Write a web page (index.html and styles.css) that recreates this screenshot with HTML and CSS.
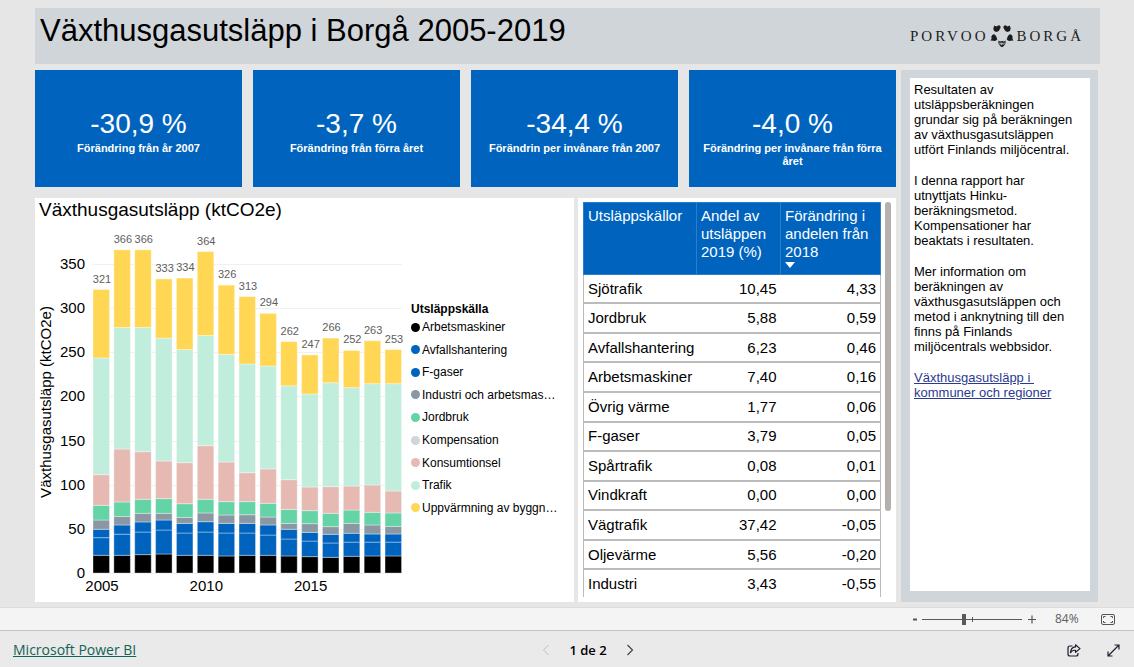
FILE: index.html
```html
<!DOCTYPE html>
<html lang="sv">
<head>
<meta charset="utf-8">
<title>Växthusgasutsläpp i Borgå 2005-2019</title>
<link rel="stylesheet" href="styles.css">
</head>
<body>
<main class="canvas">
  <header class="header">
    <h1 class="title">Växthusgasutsläpp i Borgå 2005-2019</h1>
    <div class="logo">
      <span>PORVOO</span>
      <svg class="logo-mark" viewBox="0 0 24 24" width="24" height="24" aria-hidden="true">
        <g fill="#1d1d1b">
          <path d="M4.300 1.500L6.500 2.500L8.500 1.200Q11 1.500 10.500 4Q9.500 7 6.500 8Q3.500 7.500 3.300 4.500Z"/>
          <path d="M19.700 1.500L17.500 2.500L15.500 1.200Q13 1.500 13.500 4Q14.500 7 17.500 8Q20.500 7.500 20.700 4.500Z"/>
          <path d="M.4 16.500L1.600 14.800L1.300 12.800Q2 10 4.300 10.300Q7 12 7.300 15.300Q6 17.500 3.500 16.800Z"/>
          <path d="M23.600 16.500L22.400 14.800L22.700 12.800Q22 10 19.700 10.300Q17 12 16.700 15.300Q18 17.500 20.500 16.800Z"/>
          <path d="M8.500 16.500L10 17.500L12 17L14 17.500L15.500 16.500Q16.300 21 12 23.200Q7.700 21 8.500 16.500Z"/>
        </g>
        <path d="M10 18.500V20.500M14 18.500V20.500M11.300 21V19Q12.500 18.500 13 20.700" stroke="#d0d5d9" stroke-width="1" fill="none"/>
      </svg>
      <span>BORGÅ</span>
    </div>
  </header>

  <div class="report">
    <div class="left">
      <section class="kpis">
        <article class="kpi"><p class="kpi-value">-30,9 %</p><p class="kpi-label">Förändring från år 2007</p></article>
        <article class="kpi"><p class="kpi-value">-3,7 %</p><p class="kpi-label">Förändring från förra året</p></article>
        <article class="kpi"><p class="kpi-value">-34,4 %</p><p class="kpi-label">Förändrin per invånare från 2007</p></article>
        <article class="kpi"><p class="kpi-value">-4,0 %</p><p class="kpi-label">Förändring per invånare från förra året</p></article>
      </section>
      <div class="panels">
        <section class="panel chart-panel">
          <h2 class="chart-title">Växthusgasutsläpp (ktCO2e)</h2>
          <div class="chart-body">
            <svg class="chart" id="chart" viewBox="0 0 372 376" width="372" height="376" role="img" aria-label="Växthusgasutsläpp per år"></svg>
            <div class="legend">
              <h3 class="legend-title">Utsläppskälla</h3>
              <ul class="legend-list">
                <li><i class="dot black"></i>Arbetsmaskiner</li>
                <li><i class="dot blue"></i>Avfallshantering</li>
                <li><i class="dot blue"></i>F-gaser</li>
                <li><i class="dot slate"></i>Industri och arbetsmas…</li>
                <li><i class="dot green"></i>Jordbruk</li>
                <li><i class="dot silver"></i>Kompensation</li>
                <li><i class="dot pink"></i>Konsumtionsel</li>
                <li><i class="dot mint"></i>Trafik</li>
                <li><i class="dot yellow"></i>Uppvärmning av byggn…</li>
              </ul>
            </div>
          </div>
        </section>
        <section class="panel table-panel">
          <div class="table-clip">
            <table class="sources">
              <thead>
                <tr><th class="col-name">Utsläppskällor</th><th class="col-share">Andel av utsläppen 2019 (%)</th><th>Förändring i andelen från 2018<svg class="sort" viewBox="0 0 10 6" width="10" height="6" aria-hidden="true"><path d="M0 0H10L5 6Z" fill="#fff"/></svg></th></tr>
              </thead>
              <tbody>
                <tr><td>Sjötrafik</td><td>10,45</td><td>4,33</td></tr>
                <tr><td>Jordbruk</td><td>5,88</td><td>0,59</td></tr>
                <tr><td>Avfallshantering</td><td>6,23</td><td>0,46</td></tr>
                <tr><td>Arbetsmaskiner</td><td>7,40</td><td>0,16</td></tr>
                <tr><td>Övrig värme</td><td>1,77</td><td>0,06</td></tr>
                <tr><td>F-gaser</td><td>3,79</td><td>0,05</td></tr>
                <tr><td>Spårtrafik</td><td>0,08</td><td>0,01</td></tr>
                <tr><td>Vindkraft</td><td>0,00</td><td>0,00</td></tr>
                <tr><td>Vägtrafik</td><td>37,42</td><td>-0,05</td></tr>
                <tr><td>Oljevärme</td><td>5,56</td><td>-0,20</td></tr>
                <tr><td>Industri</td><td>3,43</td><td>-0,55</td></tr>
              </tbody>
            </table>
          </div>
          <div class="scroll-thumb"></div>
        </section>
      </div>
    </div>
    <aside class="info">
      <div class="info-text">
        <p>Resultaten av utsläppsberäkningen grundar sig på beräkningen av växthusgasutsläppen utfört Finlands miljöcentral.</p>
        <p>I denna rapport har utnyttjats Hinku-beräkningsmetod. Kompensationer har beaktats i resultaten.</p>
        <p>Mer information om beräkningen av växthusgasutsläppen och metod i anknytning till den finns på Finlands miljöcentrals webbsidor.</p>
        <p><a class="info-link" href="#">Växthusgasutsläpp i&nbsp; kommuner och regioner</a></p>
      </div>
    </aside>
  </div>
</main>

<div class="zoombar">
  <button class="icon-btn zoom-step" aria-label="Zooma ut"><svg viewBox="0 0 8 10" width="8" height="10"><path d="M2 5.500H6" stroke="#555" stroke-width="2"/></svg></button>
  <input class="zoom-range" type="range" min="0" max="100" value="42" aria-label="Zoom">
  <button class="icon-btn zoom-step plus" aria-label="Zooma in"><svg viewBox="0 0 8 10" width="8" height="10"><path d="M0 5.500H8M4 1.500V9.500" stroke="#555" stroke-width="1.200"/></svg></button>
  <span class="zoom-value">84%</span>
  <button class="icon-btn" aria-label="Anpassa till sidan"><svg viewBox="0 0 14 11" width="14" height="11" fill="none" stroke="#555"><rect x=".5" y=".5" width="13" height="10" rx="1.500"/><path d="M2.500 4V2.500H4.500M9.500 2.500H11.500V4M2.500 7V8.500H4.500M9.500 8.500H11.500V7"/></svg></button>
</div>

<footer class="footer">
  <a class="brand" href="#">Microsoft Power BI</a>
  <nav class="pager">
    <button class="icon-btn" aria-label="Föregående sida" disabled><svg viewBox="0 0 8 12" width="8" height="12" fill="none" stroke="#c0c0c0"><path d="M6.500 1L1.500 6L6.500 11"/></svg></button>
    <span class="page">1 de 2</span>
    <button class="icon-btn" aria-label="Nästa sida"><svg viewBox="0 0 8 12" width="8" height="12" fill="none" stroke="#444" stroke-width="1.200"><path d="M1.500 1L6.500 6L1.500 11"/></svg></button>
  </nav>
  <div class="actions">
    <button class="icon-btn" aria-label="Dela"><svg viewBox="0 0 14 13" width="14" height="13" fill="none" stroke="#201f2e" stroke-width="1.200" stroke-linejoin="round"><path d="M5.500 2H3Q1 2 1 4V10Q1 12 3 12H9Q11 12 11 10V9"/><path d="M8.500 .8L13 4.600L8.500 8.300V6.300Q5 6 3.500 8.800Q3.800 3.300 8.500 2.900Z"/></svg></button>
    <button class="icon-btn" aria-label="Helskärm"><svg viewBox="0 0 13 13" width="13" height="13" fill="none" stroke="#201f2e" stroke-width="1.200"><path d="M1 12L12 1M7.500 1H12V5.500M1 7.500V12H5.500"/></svg></button>
  </div>
</footer>
<script src="chart.js"></script>
</body>
</html>
```
FILE: styles.css
```css
* { box-sizing: border-box; }

body {
  margin: 0;
  min-height: 100vh;
  display: flex;
  flex-direction: column;
  background: #e6e6e6;
  color: #000;
  font-family: "Liberation Sans", Arial, sans-serif;
}

h1, h2, h3, p, ul { margin: 0; padding: 0; font-weight: normal; }

.canvas {
  flex: 1;
  display: flex;
  flex-direction: column;
  gap: 6px;
  padding: 8px 34px 5px 35px;
}

.header {
  display: flex;
  justify-content: space-between;
  min-height: 56px;
  padding: 5px 16px 0 5px;
  background: #d0d5d9;
}

.title { font-size: 31px; line-height: 36px; }

.logo {
  display: flex;
  align-items: center;
  align-self: flex-start;
  gap: 2px;
  margin-top: 11px;
  font-family: "Liberation Serif", "Times New Roman", serif;
  font-size: 15px;
  line-height: 24px;
  letter-spacing: 3px;
  color: #1d1d1b;
}

.report {
  flex: 1;
  display: grid;
  grid-template-columns: minmax(0, 1fr) 197px;
  gap: 5px;
  padding-right: 2px;
}

.left { display: flex; flex-direction: column; gap: 11px; }

.kpis { display: grid; grid-template-columns: repeat(4, minmax(0, 1fr)); gap: 11px; }

.kpi {
  min-height: 117px;
  padding: 38px 14px 10px;
  background: #0064bf;
  color: #fff;
  text-align: center;
}

.kpi-value { font-size: 28px; line-height: 32px; }
.kpi-label { margin-top: 2px; font-size: 11px; line-height: 13px; font-weight: bold; }

.panels {
  flex: 1;
  display: grid;
  grid-template-columns: minmax(0, 1fr) 318px;
  gap: 4px;
}

.panel { background: #fff; }

.chart-title { padding-left: 4px; font-size: 19px; line-height: 24px; }
.chart-body { display: flex; gap: 4px; padding-top: 2px; }
.chart { flex: none; display: block; }

.tick { font-size: 15px; }
.bar-label { font-size: 11px; fill: #605e5c; }

.legend { min-width: 0; padding-top: 78px; font-size: 12px; line-height: 14px; }
.legend-title { font-size: 12px; line-height: 14px; font-weight: bold; }
.legend-list { display: grid; grid-auto-rows: 1fr; height: 203px; list-style: none; }
.legend-list li { display: flex; align-items: center; gap: 2px; white-space: nowrap; }

.dot { width: 9px; height: 9px; border-radius: 50%; }
.black { background: #000; fill: #000; }
.blue { background: #0064bf; fill: #0064bf; }
.slate { background: #8b98a3; fill: #8b98a3; }
.green { background: #64d3a6; fill: #64d3a6; }
.silver { background: #d0d5d9; }
.pink { background: #e6bab3; fill: #e6bab3; }
.mint { background: #c1eddc; fill: #c1eddc; }
.yellow { background: #ffd754; fill: #ffd754; }

.table-panel { display: flex; gap: 4px; padding: 4px 5px 5px; }
.table-clip { flex: 1; height: 395px; overflow: hidden; }

.sources {
  width: 100%;
  height: 398px;
  border-collapse: collapse;
  table-layout: fixed;
  font-size: 15px;
  line-height: 18px;
}

.sources th {
  height: 72px;
  padding: 4px 2px 0 4px;
  background: #0064bf;
  border: 1px solid #2a7fcb;
  color: #fff;
  font-weight: normal;
  text-align: left;
  vertical-align: top;
}

.col-name { width: 113px; }
.col-share { width: 84px; }
.sort { display: block; margin-top: 1px; }

.sources td { padding: 0 4px; border-bottom: 2px solid #bcbcbc; text-align: right; }
.sources td:first-child { border-left: 1px solid #bcbcbc; text-align: left; }
.sources td:last-child { border-right: 1px solid #bcbcbc; }

.scroll-thumb { width: 6px; height: 309px; border-radius: 3px; background: #b3b0ad; }

.info { display: flex; padding: 8px 8px 11px 9px; background: #d0d5d9; }
.info-text {
  flex: 1;
  display: flex;
  flex-direction: column;
  gap: 16px;
  padding: 4px 14px 4px 4px;
  background: #fff;
  font-size: 13px;
  line-height: 15px;
}
.info-link { color: #2b3a91; }

.icon-btn { display: flex; padding: 0; border: 0; background: none; }

.zoombar {
  display: flex;
  align-items: center;
  justify-content: flex-end;
  height: 24px;
  padding-right: 19px;
  border-top: 1px solid #dcdcdc;
  border-bottom: 1px solid #c4c4c4;
  background: #f4f4f4;
}

.zoom-range {
  appearance: none;
  width: 100px;
  height: 13px;
  margin: 0 6px 0 3px;
  background:
    linear-gradient(#5c5a58, #5c5a58) 0 6px / 100% 1px no-repeat,
    linear-gradient(#5c5a58, #5c5a58) 50px 4px / 1px 5px no-repeat;
}
.zoom-range::-webkit-slider-thumb {
  appearance: none;
  width: 4px;
  height: 11px;
  background: #5c5a58;
}

.zoom-value {
  width: 45px;
  margin-left: 19px;
  margin-right: 1px;
  font-family: "Open Sans", "Segoe UI", sans-serif;
  font-size: 12px;
  line-height: 18px;
  color: #605e5c;
}

.footer {
  display: grid;
  grid-template-columns: 1fr auto 1fr;
  align-items: center;
  height: 36px;
  padding: 2px 14px 0 13px;
  background: #eaeaea;
  font-family: "Open Sans", "Segoe UI", sans-serif;
  font-size: 13px;
  line-height: 18px;
}

.brand { justify-self: start; color: #0f6357; font-size: 14px; }
.pager { display: flex; align-items: center; gap: 19px; margin-left: 43px; }
.page { font-weight: 600; }
.actions { display: flex; align-items: center; justify-self: end; gap: 26px; }
```
FILE: chart.js
```js
// Cumulative levels (ktCO2e) for each year, from the bottom segment up.
const years = [
  [20, 40, 49.5, 60, 76.6, 111.4, 243.5, 321],
  [20, 44, 54.4, 64, 80.4, 140.4, 278, 366],
  [20.8, 46.4, 57.8, 67.6, 83.4, 137.4, 278, 366],
  [21.5, 48.7, 60, 67.6, 84.2, 126.8, 266, 333],
  [20, 45.3, 56.2, 63, 78.5, 125, 253, 334],
  [20, 46.4, 58.1, 68, 83.4, 144.2, 269, 364],
  [19.3, 45.3, 56.2, 65.7, 80.8, 125.7, 247.6, 326],
  [20, 45.3, 56.2, 66, 80.8, 113.6, 236.7, 313],
  [20, 43, 54.4, 63.4, 78.9, 117.8, 234.4, 294],
  [19.3, 38.5, 49.5, 56.2, 72, 105.7, 212, 262],
  [18.5, 36.2, 46, 55.9, 70.6, 97.4, 202.7, 247],
  [17.7, 34, 43.8, 52.5, 67.6, 97.8, 215.5, 266],
  [18.9, 35, 45, 56.2, 71.3, 98.5, 209.9, 252],
  [19.3, 35, 44.2, 54.4, 68.7, 99.7, 214.4, 263],
  [19.3, 35, 44.2, 52.8, 68, 92.9, 214.4, 253]
];
const series = ["black", "blue", "blue", "slate", "green", "pink", "mint", "yellow"];
const svg = document.getElementById("chart");
const zero = 349, scale = 0.883, left = 58, pitch = 20.86, barWidth = 16.5;

function add(tag, attrs, text) {
  const el = document.createElementNS("http://www.w3.org/2000/svg", tag);
  for (const key in attrs) el.setAttribute(key, attrs[key]);
  if (text !== undefined) el.textContent = text;
  svg.appendChild(el);
}

for (let v = 0; v <= 350; v += 50) {
  const y = Math.round(zero - v * scale);
  add("rect", { x: left, y: y, width: 309, height: 1, fill: "#f0f0f0" });
  add("text", { x: 50, y: y + 5, "text-anchor": "end", class: "tick" }, v);
}

years.forEach((levels, i) => {
  const x = left + i * pitch;
  let base = 0;
  levels.forEach((top, s) => {
    add("rect", {
      x: x, y: zero - top * scale, width: barWidth, height: (top - base) * scale,
      class: series[s], stroke: "#fff", "stroke-width": 1, "stroke-opacity": 0.35
    });
    base = top;
  });
  const total = levels[levels.length - 1];
  add("text", { x: x + 9, y: zero - total * scale - 7, "text-anchor": "middle", class: "bar-label" }, total);
  if (i % 5 === 0) {
    add("text", { x: x + 9, y: 367, "text-anchor": "middle", class: "tick" }, 2005 + i);
  }
});

add("text", { transform: "translate(16 178) rotate(-90)", "text-anchor": "middle", class: "tick" }, "Växthusgasutsläpp (ktCO2e)");
```
